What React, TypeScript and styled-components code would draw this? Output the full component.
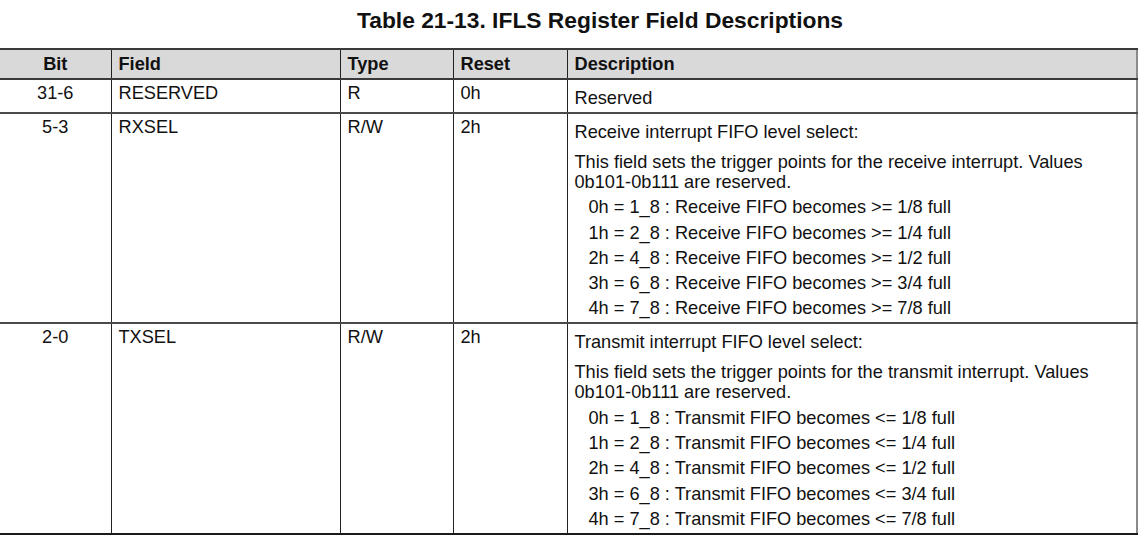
import styled, { createGlobalStyle } from "styled-components";

const GlobalStyle = createGlobalStyle`
  html, body {
    margin: 0;
    padding: 0;
    background: #ffffff;
  }
  body {
    font-family: "Liberation Sans", Arial, sans-serif;
    color: #111;
  }
`;

type Choice = { code: string; text: string };

type FieldRow = {
  bit: string;
  field: string;
  type: string;
  reset: string;
  title: string;
  detail?: string[];
  choices?: Choice[];
};

const rows: FieldRow[] = [
  { bit: "31-6", field: "RESERVED", type: "R", reset: "0h", title: "Reserved" },
  {
    bit: "5-3",
    field: "RXSEL",
    type: "R/W",
    reset: "2h",
    title: "Receive interrupt FIFO level select:",
    detail: [
      "This field sets the trigger points for the receive interrupt. Values",
      "0b101-0b111 are reserved.",
    ],
    choices: [
      { code: "0h = 1_8", text: "Receive FIFO becomes >= 1/8 full" },
      { code: "1h = 2_8", text: "Receive FIFO becomes >= 1/4 full" },
      { code: "2h = 4_8", text: "Receive FIFO becomes >= 1/2 full" },
      { code: "3h = 6_8", text: "Receive FIFO becomes >= 3/4 full" },
      { code: "4h = 7_8", text: "Receive FIFO becomes >= 7/8 full" },
    ],
  },
  {
    bit: "2-0",
    field: "TXSEL",
    type: "R/W",
    reset: "2h",
    title: "Transmit interrupt FIFO level select:",
    detail: [
      "This field sets the trigger points for the transmit interrupt. Values",
      "0b101-0b111 are reserved.",
    ],
    choices: [
      { code: "0h = 1_8", text: "Transmit FIFO becomes <= 1/8 full" },
      { code: "1h = 2_8", text: "Transmit FIFO becomes <= 1/4 full" },
      { code: "2h = 4_8", text: "Transmit FIFO becomes <= 1/2 full" },
      { code: "3h = 6_8", text: "Transmit FIFO becomes <= 3/4 full" },
      { code: "4h = 7_8", text: "Transmit FIFO becomes <= 7/8 full" },
    ],
  },
];

const App: React.FC = () => {
  return (
    <>
      <GlobalStyle />
      <Page>
        <Caption>Table 21-13. IFLS Register Field Descriptions</Caption>
        <Table>
          <colgroup>
            <col style={{ width: 111 }} />
            <col style={{ width: 229 }} />
            <col style={{ width: 113 }} />
            <col style={{ width: 114 }} />
            <col />
          </colgroup>
          <thead>
            <tr>
              <Head $center>Bit</Head>
              <Head>Field</Head>
              <Head>Type</Head>
              <Head>Reset</Head>
              <Head>Description</Head>
            </tr>
          </thead>
          <tbody>
            {rows.map((row) => (
              <tr key={row.bit}>
                <Cell $center>{row.bit}</Cell>
                <Cell>{row.field}</Cell>
                <Cell>{row.type}</Cell>
                <Cell>{row.reset}</Cell>
                <Cell>
                  <Para>{row.title}</Para>
                  {row.detail && (
                    <Para $gap={10}>
                      {row.detail.map((line) => (
                        <Line key={line}>{line}</Line>
                      ))}
                    </Para>
                  )}
                  {row.choices?.map((c) => (
                    <Choice key={c.code}>
                      {c.code} : {c.text}
                    </Choice>
                  ))}
                </Cell>
              </tr>
            ))}
          </tbody>
        </Table>
      </Page>
    </>
  );
};

export default App;

const Page = styled.div`
  width: 1146px;
  padding-top: 7px;
`;

const Caption = styled.h1`
  margin: 0 0 15px;
  padding-left: 54px;
  text-align: center;
  font-size: 22.8px;
  line-height: 26px;
  font-weight: 700;
  color: #111;
`;

const Table = styled.table`
  width: 1138px;
  border-collapse: collapse;
  table-layout: fixed;
  font-size: 18.2px;
  line-height: 20px;
  border-right: 2px solid #8a8a8a;

  tbody tr:last-child td {
    border-bottom: 2px solid #1a1a1a;
  }
`;

const Head = styled.th<{ $center?: boolean }>`
  height: 30px;
  padding: 0 7px;
  box-sizing: border-box;
  background: #d9d9d9;
  font-weight: 700;
  text-align: ${(p) => (p.$center ? "center" : "left")};
  vertical-align: middle;
  border-top: 2px solid #3a3a3a;
  border-bottom: 2px solid #3a3a3a;
  border-left: 1px solid #222;

  &:first-child {
    border-left: none;
  }
`;

const Cell = styled.td<{ $center?: boolean }>`
  padding: 3px 7px 4px;
  text-align: ${(p) => (p.$center ? "center" : "left")};
  vertical-align: top;
  border-bottom: 2px solid #4a4a4a;
  border-left: 1px solid #222;

  &:first-child {
    border-left: none;
  }
`;

const Para = styled.div<{ $gap?: number }>`
  margin-top: ${(p) => p.$gap ?? 5}px;
`;

const Line = styled.div``;

const Choice = styled.div`
  margin-top: 5.3px;
  padding-left: 14px;
`;
